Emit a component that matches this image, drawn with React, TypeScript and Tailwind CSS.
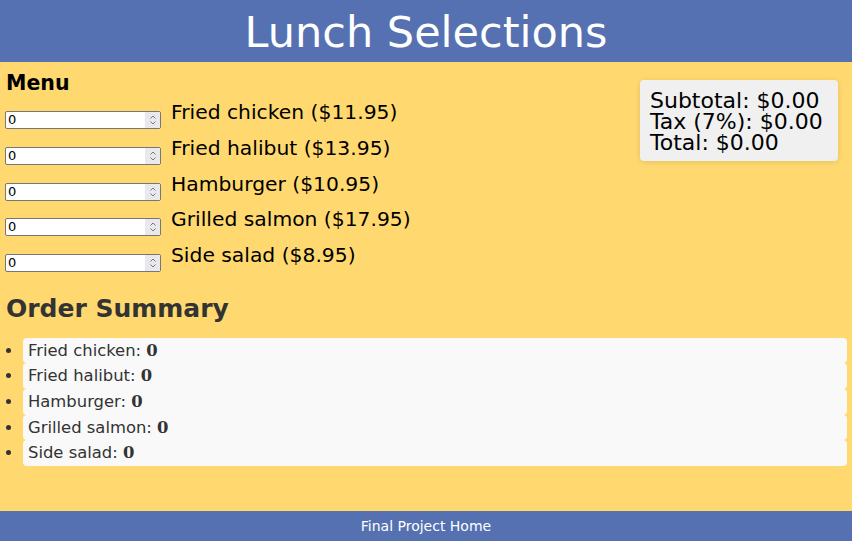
import { useState } from 'react';

const items = [
  { name: 'Fried chicken', price: 11.95 },
  { name: 'Fried halibut', price: 13.95 },
  { name: 'Hamburger', price: 10.95 },
  { name: 'Grilled salmon', price: 17.95 },
  { name: 'Side salad', price: 8.95 },
];

export default function App() {
  const [qty, setQty] = useState<number[]>([0, 0, 0, 0, 0]);

  const subtotal = items.reduce((s, it, i) => s + it.price * qty[i], 0);
  const tax = subtotal * 0.07;

  const setAt = (i: number, v: string) => {
    const n = parseInt(v) || 0;
    setQty(qty.map((q, j) => (j === i ? n : q)));
  };

  return (
    <div className="min-h-screen flex flex-col bg-[#ffd970] font-['DejaVu_Sans',Verdana,sans-serif]">
      <header className="h-[62px] flex items-center justify-center bg-[#5571b1]">
        <h1 className="text-[43px] leading-[50px] text-white pt-[2px]">Lunch Selections</h1>
      </header>

      <main className="flex-1 px-[6px] pt-[9px]">
        <div className="flex justify-between">
          {/* menu */}
          <div>
            <h3 className="text-[20.5px] leading-[24px] font-bold text-black">Menu</h3>
            <div className="mt-[5px]">
              {items.map((it, i) => (
                <div key={it.name} className="flex items-start h-[35.75px]">
                  <div className="mt-[11px] flex w-[156px] h-[18px] border border-[#767676] rounded-[2px] bg-white -ml-px">
                    <input
                      type="text"
                      value={qty[i]}
                      onChange={(e) => setAt(i, e.target.value)}
                      className="flex-1 min-w-0 px-[2px] text-[13px] leading-[16px] text-black outline-none bg-transparent"
                    />
                    <div className="w-[15px] bg-[#e9e9ed] flex items-center justify-center">
                      <svg width="8" height="12" viewBox="0 0 8 12" fill="none" stroke="#7a7a7a" strokeWidth="1">
                        <path d="M1.5 4.5 L4 2 L6.5 4.5" />
                        <path d="M1.5 7.5 L4 10 L6.5 7.5" />
                      </svg>
                    </div>
                  </div>
                  <span className="ml-[10px] text-[20.3px] leading-[24px] text-black">
                    {it.name} (${it.price.toFixed(2)})
                  </span>
                </div>
              ))}
            </div>
          </div>

          {/* totals */}
          <div className="mt-[9px] mr-[8px] self-start w-[198px] bg-[#f0f0f0] rounded-[4px] shadow-[0_1px_6px_rgba(0,0,0,0.12)] px-[10px] pt-[10px] pb-[8px] text-[22px] leading-[21px] text-black">
            <div>Subtotal: ${subtotal.toFixed(2)}</div>
            <div>Tax (7%): ${tax.toFixed(2)}</div>
            <div>Total: ${(subtotal + tax).toFixed(2)}</div>
          </div>
        </div>

        <h2 className="mt-[15px] text-[25px] leading-[30px] font-bold text-[#333]">Order Summary</h2>
        <ul className="mt-[14px] list-disc pl-[17px] text-[#333]">
          {items.map((it, i) => (
            <li key={it.name} className="h-[25.6px] bg-[#f9f9f9] rounded-[4px] pl-[5px] text-[16.4px] leading-[25.6px] mr-[-1px]">
              {it.name}: <strong className="font-['DejaVu_Serif',serif] font-bold">{qty[i]}</strong>
            </li>
          ))}
        </ul>
      </main>

      <footer className="h-[30px] flex items-center justify-center bg-[#5571b1]">
        <a className="text-[14px] text-white">Final Project Home</a>
      </footer>
    </div>
  );
}
